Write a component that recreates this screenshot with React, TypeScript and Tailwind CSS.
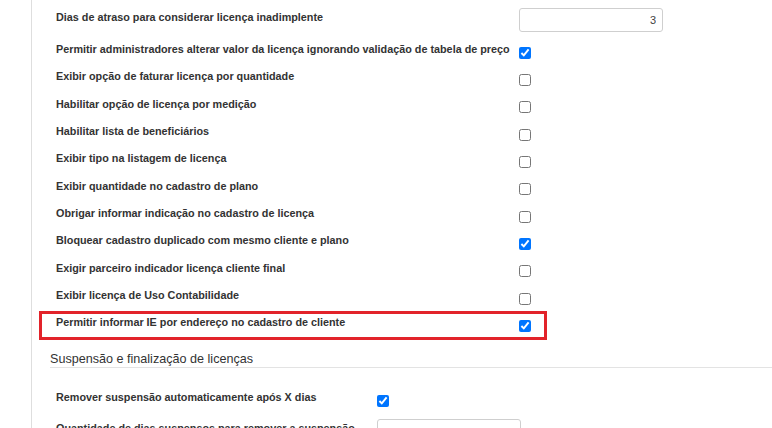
const licenseOptions = [
  { label: "Permitir administradores alterar valor da licença ignorando validação de tabela de preço", checked: true },
  { label: "Exibir opção de faturar licença por quantidade", checked: false },
  { label: "Habilitar opção de licença por medição", checked: false },
  { label: "Habilitar lista de beneficiários", checked: false },
  { label: "Exibir tipo na listagem de licença", checked: false },
  { label: "Exibir quantidade no cadastro de plano", checked: false },
  { label: "Obrigar informar indicação no cadastro de licença", checked: false },
  { label: "Bloquear cadastro duplicado com mesmo cliente e plano", checked: true },
  { label: "Exigir parceiro indicador licença cliente final", checked: false },
  { label: "Exibir licença de Uso Contabilidade", checked: false },
  { label: "Permitir informar IE por endereço no cadastro de cliente", checked: true, highlight: true },
];

function Check({ checked }: { checked: boolean }) {
  return <input type="checkbox" defaultChecked={checked} className="m-0 h-[12px] w-[12px] shrink-0" />;
}

export default function App() {
  return (
    <div className="flex h-[428px] w-[772px] overflow-hidden bg-white font-['Liberation_Sans',Arial,sans-serif] text-[#333]">
      {/* Sidebar edge */}
      <div className="w-[32px] shrink-0 border-r border-[#dedede]" />

      <div className="flex-1 pl-[18px]">
        {/* Licenças */}
        <div className="flex h-[39px] items-center pl-[6px]">
          <label className="mb-[4px] w-[463px] text-[10.8px] font-bold">
            Dias de atraso para considerar licença inadimplente
          </label>
          <input
            readOnly
            value="3"
            className="h-[24px] w-[144px] rounded-[3px] border border-[#cfcfcf] px-[6px] text-right text-[11px] text-[#444] outline-none"
          />
        </div>

        {licenseOptions.map((opt) => (
          <div key={opt.label} className="relative flex h-[27.33px] items-center pl-[6px]">
            {opt.highlight && (
              <div className="pointer-events-none absolute -left-[11.5px] top-[-1.4px] h-[29.6px] w-[508.8px] border-[3px] border-[#e2232a]" />
            )}
            <label className="mb-[7px] w-[463px] text-[10.8px] font-bold">{opt.label}</label>
            <Check checked={opt.checked} />
          </div>
        ))}

        {/* Suspensão */}
        <h4 className="mt-[11px] border-b border-[#e3e3e3] text-[12.6px] leading-[16px] font-normal">
          Suspensão e finalização de licenças
        </h4>

        <div className="mt-[20px] flex h-[27.33px] items-center pl-[6px]">
          <label className="mb-[8px] w-[321px] text-[10.8px] font-bold">
            Remover suspensão automaticamente após X dias
          </label>
          <Check checked />
        </div>
        <div className="flex h-[33px] items-center pl-[6px]">
          <label className="mb-[7px] w-[321px] text-[10.8px] font-bold">
            Quantidade de dias suspensos para remover a suspensão
          </label>
          <input
            readOnly
            value=""
            className="h-[24px] w-[144px] rounded-[3px] border border-[#cfcfcf] px-[6px] text-right text-[11px] outline-none"
          />
        </div>
      </div>
    </div>
  );
}
